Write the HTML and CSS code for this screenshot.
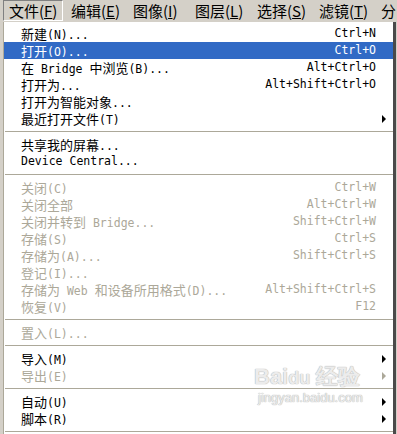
FILE: index.html
```html
<!DOCTYPE html>
<html>
<head>
    <title></title>
    <meta charset="utf-8">
    <link rel="stylesheet" href="styles.css">
</head>
<body>
<div class="menubar">
    <span class="menubar-item pressed">文件(<u>F</u>)</span>
    <span class="menubar-item">编辑(<u>E</u>)</span>
    <span class="menubar-item">图像(<u>I</u>)</span>
    <span class="menubar-item">图层(<u>L</u>)</span>
    <span class="menubar-item">选择(<u>S</u>)</span>
    <span class="menubar-item">滤镜(<u>T</u>)</span>
    <span class="menubar-item last">分</span>
</div>

<div class="menu">
    <div class="item"><span class="label">新建<span class="en">(N)...</span></span><span class="key">Ctrl+N</span><span class="sub"></span></div>
    <div class="item active"><span class="label">打开<span class="en">(O)...</span></span><span class="key">Ctrl+O</span><span class="sub"></span></div>
    <div class="item"><span class="label">在<span class="en"> Bridge </span>中浏览<span class="en">(B)...</span></span><span class="key">Alt+Ctrl+O</span><span class="sub"></span></div>
    <div class="item"><span class="label">打开为<span class="en">...</span></span><span class="key">Alt+Shift+Ctrl+O</span><span class="sub"></span></div>
    <div class="item"><span class="label">打开为智能对象<span class="en">...</span></span><span class="key"></span><span class="sub"></span></div>
    <div class="item"><span class="label">最近打开文件<span class="en">(T)</span></span><span class="key"></span><span class="sub arrow"></span></div>
    <div class="sep"></div>
    <div class="item"><span class="label">共享我的屏幕<span class="en">...</span></span><span class="key"></span><span class="sub"></span></div>
    <div class="item"><span class="label en">Device Central...</span><span class="key"></span><span class="sub"></span></div>
    <div class="sep"></div>
    <div class="item off"><span class="label">关闭<span class="en">(C)</span></span><span class="key">Ctrl+W</span><span class="sub"></span></div>
    <div class="item off"><span class="label">关闭全部</span><span class="key">Alt+Ctrl+W</span><span class="sub"></span></div>
    <div class="item off"><span class="label">关闭并转到<span class="en"> Bridge...</span></span><span class="key">Shift+Ctrl+W</span><span class="sub"></span></div>
    <div class="item off"><span class="label">存储<span class="en">(S)</span></span><span class="key">Ctrl+S</span><span class="sub"></span></div>
    <div class="item off"><span class="label">存储为<span class="en">(A)...</span></span><span class="key">Shift+Ctrl+S</span><span class="sub"></span></div>
    <div class="item off"><span class="label">登记<span class="en">(I)...</span></span><span class="key"></span><span class="sub"></span></div>
    <div class="item off"><span class="label">存储为<span class="en"> Web </span>和设备所用格式<span class="en">(D)...</span></span><span class="key">Alt+Shift+Ctrl+S</span><span class="sub"></span></div>
    <div class="item off"><span class="label">恢复<span class="en">(V)</span></span><span class="key">F12</span><span class="sub"></span></div>
    <div class="sep"></div>
    <div class="item off"><span class="label">置入<span class="en">(L)...</span></span><span class="key"></span><span class="sub"></span></div>
    <div class="sep"></div>
    <div class="item"><span class="label">导入<span class="en">(M)</span></span><span class="key"></span><span class="sub arrow"></span></div>
    <div class="item off"><span class="label">导出<span class="en">(E)</span></span><span class="key"></span><span class="sub arrow"></span></div>
    <div class="sep"></div>
    <div class="item"><span class="label">自动<span class="en">(U)</span></span><span class="key"></span><span class="sub arrow"></span></div>
    <div class="item"><span class="label">脚本<span class="en">(R)</span></span><span class="key"></span><span class="sub arrow"></span></div>
    <div class="sep"></div>
</div>

<div class="watermark">
    <div class="wm-logo">Bai<span class="wm-paw">du</span> 经验</div>
    <div class="wm-url">jingyan.baidu.com</div>
</div>
</body>
</html>
```

FILE: styles.css
```css
html,body{
    margin: 0;
    padding: 0;
    background: #d4d0c8;
    overflow: hidden;
}

body{
    font-family: "Noto Sans CJK SC", sans-serif;
    position: relative;
    width: 397px;
    height: 434px;
}

.en{
    font-family: "DejaVu Sans Mono", "Noto Sans CJK SC", monospace;
    font-size: 11.5px;
    line-height: 17px;
}

/* top menu bar */
.menubar{
    height: 22px;
    display: flex;
    gap: 2px;
    padding-left: 3px;
    font-size: 15px;
    line-height: 19px;
    overflow: hidden;
}

.menubar-item{
    width: 60px;
    flex: none;
    box-sizing: border-box;
    height: 21px;
    padding-left: 5px;
    border: 1px solid transparent;
    white-space: nowrap;
    color: #000;
}

.menubar-item.last{
    width: 19px;
}

.menubar-item u{
    text-decoration-thickness: 1px;
}

.menubar-item.pressed{
    border-color: #808080 #fff #fff #808080;
}

/* drop down */
.menu{
    margin-left: 3px;
    width: 389px;
    background: #fff;
    border-left: 1px solid #aca899;
    border-right: 3px solid #4a4a4a;
    padding-top: 3px;
    padding-bottom: 10px;
    font-size: 13px;
}

.item{
    display: flex;
    height: 17px;
    line-height: 17px;
    padding-left: 17px;
    color: #000;
    white-space: nowrap;
}

.item .label{
    flex: 1;
}

.item .key{
    font-family: "DejaVu Sans Mono", monospace;
    font-size: 11.5px;
    text-align: right;
}

.item .sub{
    width: 17px;
    flex: none;
    position: relative;
}

.item .arrow::after{
    content: "";
    position: absolute;
    left: 6px;
    top: 5px;
    border-left: 4px solid #000;
    border-top: 4px solid transparent;
    border-bottom: 4px solid transparent;
}

.item.off{
    color: #aca899;
}

.item.off .arrow::after{
    border-left-color: #aca899;
}

.item.active{
    background: #316ac5;
    color: #fff;
}

.sep{
    height: 1px;
    margin: 4px 0 4px 1px;
    background: #aca899;
}

/* baidu watermark */
.watermark{
    position: absolute;
    left: 254px;
    top: 366px;
    color: #ececec;
    text-shadow: 0 0 1px #b4b4b4, 0 0 1px #b4b4b4;
    font-family: "Liberation Sans", sans-serif;
    pointer-events: none;
}

.wm-logo{
    font-size: 22px;
    font-weight: bold;
    line-height: 22px;
}

.wm-paw{
    font-size: 18px;
}

.wm-url{
    font-size: 13px;
    line-height: 18px;
    padding-left: 4px;
}
```
